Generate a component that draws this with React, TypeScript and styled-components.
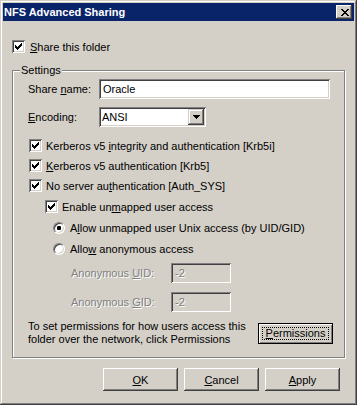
import React from "react";
import styled, { createGlobalStyle } from "styled-components";

const GlobalStyle = createGlobalStyle`
  body {
    margin: 0;
    background: #d4d0c8;
    font-family: "Liberation Sans", Arial, sans-serif;
    font-size: 11px;
    color: #000;
  }
`;

const Window = styled.div`
  width: 357px;
  height: 405px;
  box-sizing: border-box;
  padding: 3px;
  background: #d4d0c8;
  box-shadow: inset -1px -1px #404040, inset 1px 1px #d4d0c8,
    inset -2px -2px #808080, inset 2px 2px #fff;
  display: flex;
  flex-direction: column;
`;

const TitleBar = styled.div`
  height: 18px;
  display: flex;
  align-items: center;
  justify-content: space-between;
  padding: 0 2px 0 1px;
  background: #0a246a;
  color: #fff;
  font-weight: bold;
  font-size: 11px;
`;

const CloseButton = styled.div`
  width: 16px;
  height: 14px;
  box-sizing: border-box;
  background: #d4d0c8;
  display: flex;
  align-items: center;
  justify-content: center;
  box-shadow: inset -1px -1px #404040, inset 1px 1px #fff,
    inset -2px -2px #808080, inset 2px 2px #d4d0c8;
  padding-left: 1px;
`;

const Body = styled.div`
  display: flex;
  flex-direction: column;
  padding: 19px 9px 0 9px;
`;

const CheckRow = styled.label<{ $top?: number; $indent?: number; $gap?: number }>`
  display: flex;
  align-items: center;
  gap: ${(p) => p.$gap ?? 4}px;
  height: 13px;
  margin-top: ${(p) => p.$top ?? 0}px;
  margin-left: ${(p) => p.$indent ?? 0}px;
  white-space: nowrap;
`;

const RadioRow = styled(CheckRow)`
  gap: 5px;
  height: 12px;
`;

const sunken = `
  box-shadow: inset 1px 1px #808080, inset -1px -1px #fff,
    inset 2px 2px #404040, inset -2px -2px #d4d0c8;
`;

const Box = styled.span`
  width: 13px;
  height: 13px;
  flex: none;
  background: #fff;
  ${sunken}
  display: block;
  svg {
    display: block;
  }
`;

const Radio = styled.span<{ $on?: boolean }>`
  width: 12px;
  height: 12px;
  box-sizing: border-box;
  flex: none;
  border-radius: 50%;
  background: #fff;
  border: 1px solid;
  border-color: #808080 #fff #fff #808080;
  box-shadow: inset 1px 1px #404040, inset -1px -1px #d4d0c8;
  display: flex;
  align-items: center;
  justify-content: center;
  &::before {
    content: "";
    width: 4px;
    height: 4px;
    border-radius: 1px;
    background: ${(p) => (p.$on ? "#000" : "transparent")};
  }
`;

const Group = styled.fieldset`
  margin: 10px 0 0;
  padding: 2px 11px 11px 15px;
  border: 1px solid #808080;
  box-shadow: inset 1px 1px #fff, 1px 1px #fff;
  min-width: 0;
  display: flex;
  flex-direction: column;
`;

const Legend = styled.legend`
  margin-left: -8px;
  padding: 0 1px;
  line-height: 14px;
  background: #d4d0c8;
`;

const FieldRow = styled.div<{ $top?: number; $indent?: number }>`
  display: flex;
  align-items: center;
  margin-top: ${(p) => p.$top ?? 0}px;
  margin-left: ${(p) => p.$indent ?? 0}px;
`;

const FieldLabel = styled.span<{ $width: number; $disabled?: boolean }>`
  width: ${(p) => p.$width}px;
  flex: none;
  color: ${(p) => (p.$disabled ? "#808080" : "#000")};
  text-shadow: ${(p) => (p.$disabled ? "1px 1px 0 #fff" : "none")};
`;

const TextField = styled.div<{ $width: number; $disabled?: boolean }>`
  width: ${(p) => p.$width}px;
  height: 20px;
  box-sizing: border-box;
  padding: 0 4px;
  display: flex;
  align-items: center;
  background: ${(p) => (p.$disabled ? "#d4d0c8" : "#fff")};
  color: ${(p) => (p.$disabled ? "#808080" : "#000")};
  text-shadow: ${(p) => (p.$disabled ? "1px 1px 0 #fff" : "none")};
  ${sunken}
`;

const Select = styled.div`
  width: 107px;
  height: 20px;
  box-sizing: border-box;
  padding: 2px 2px 2px 3px;
  display: flex;
  align-items: center;
  justify-content: space-between;
  background: #fff;
  ${sunken}
`;

const DropButton = styled.span`
  width: 16px;
  height: 16px;
  box-sizing: border-box;
  background: #d4d0c8;
  display: flex;
  align-items: center;
  justify-content: center;
  box-shadow: inset -1px -1px #404040, inset 1px 1px #d4d0c8,
    inset -2px -2px #808080, inset 2px 2px #fff;
  svg {
    display: block;
  }
`;

const PermRow = styled.div`
  display: flex;
  align-items: center;
  justify-content: space-between;
  margin-top: 8px;
`;

const PermText = styled.p`
  margin: 0;
  line-height: 13px;
  white-space: nowrap;
`;

const Button = styled.div<{ $default?: boolean }>`
  width: 75px;
  height: ${(p) => (p.$default ? 21 : 23)}px;
  box-sizing: border-box;
  display: flex;
  align-items: center;
  justify-content: center;
  background: #d4d0c8;
  ${(p) =>
    p.$default
      ? `border: 1px solid #000;
         padding: 3px;
         box-shadow: inset 1px 1px #fff, inset -1px -1px #808080;`
      : `box-shadow: inset -1px -1px #404040, inset 1px 1px #fff,
         inset -2px -2px #808080, inset 2px 2px #d4d0c8;`}
`;

const Focus = styled.span`
  flex: 1;
  align-self: stretch;
  display: flex;
  align-items: center;
  justify-content: center;
  border: 1px dotted #000;
`;

const ButtonRow = styled.div`
  display: flex;
  justify-content: flex-end;
  gap: 6px;
  margin-top: 10px;
  padding-right: 5px;
`;

const Check = () => (
  <Box>
    <svg width="13" height="13" viewBox="0 0 13 13" shapeRendering="crispEdges">
      <path
        fill="#000"
        d="M3 5h1v3h-1z M4 6h1v3h-1z M5 7h1v3h-1z M6 6h1v3h-1z M7 5h1v3h-1z M8 4h1v3h-1z M9 3h1v3h-1z"
      />
    </svg>
  </Box>
);

const CloseGlyph = () => (
  <svg width="8" height="7" viewBox="0 0 8 7" shapeRendering="crispEdges">
    <path
      fill="#000"
      d="M0 0h2v1h-2z M6 0h2v1h-2z M1 1h2v1h-2z M5 1h2v1h-2z M2 2h4v1h-4z M3 3h2v1h-2z M2 4h4v1h-4z M1 5h2v1h-2z M5 5h2v1h-2z M0 6h2v1h-2z M6 6h2v1h-2z"
    />
  </svg>
);

export default function App() {
  return (
    <>
      <GlobalStyle />
      <Window>
        <TitleBar>
          <span>NFS Advanced Sharing</span>
          <CloseButton>
            <CloseGlyph />
          </CloseButton>
        </TitleBar>
        <Body>
          <CheckRow $gap={5}>
            <Check />
            <span>
              <u>S</u>hare this folder
            </span>
          </CheckRow>

          <Group>
            <Legend>Settings</Legend>

            <FieldRow>
              <FieldLabel $width={71}>
                Share <u>n</u>ame:
              </FieldLabel>
              <TextField $width={231}>Oracle</TextField>
            </FieldRow>

            <FieldRow $top={8}>
              <FieldLabel $width={71}>
                <u>E</u>ncoding:
              </FieldLabel>
              <Select>
                <span>ANSI</span>
                <DropButton>
                  <svg width="7" height="4" viewBox="0 0 7 4" shapeRendering="crispEdges">
                    <path fill="#000" d="M0 0h7v1h-7z M1 1h5v1h-5z M2 2h3v1h-3z M3 3h1v1h-1z" />
                  </svg>
                </DropButton>
              </Select>
            </FieldRow>

            <CheckRow $top={12} $indent={1}>
              <Check />
              <span>
                Kerberos v5 <u>i</u>ntegrity and authentication [Krb5i]
              </span>
            </CheckRow>
            <CheckRow $top={7} $indent={1}>
              <Check />
              <span>
                <u>K</u>erberos v5 authentication [Krb5]
              </span>
            </CheckRow>
            <CheckRow $top={7} $indent={1}>
              <Check />
              <span>
                No server au<u>t</u>hentication [Auth_SYS]
              </span>
            </CheckRow>
            <CheckRow $top={8} $indent={17}>
              <Check />
              <span>
                Enable un<u>m</u>apped user access
              </span>
            </CheckRow>
            <RadioRow $top={9} $indent={25}>
              <Radio $on />
              <span>
                A<u>l</u>low unmapped user Unix access (by UID/GID)
              </span>
            </RadioRow>
            <RadioRow $top={9} $indent={25}>
              <Radio />
              <span>
                Allo<u>w</u> anonymous access
              </span>
            </RadioRow>

            <FieldRow $top={8} $indent={43}>
              <FieldLabel $width={100} $disabled>
                Anonymous <u>U</u>ID:
              </FieldLabel>
              <TextField $width={60} $disabled>
                -2
              </TextField>
            </FieldRow>
            <FieldRow $top={9} $indent={43}>
              <FieldLabel $width={100} $disabled>
                Anonymous <u>G</u>ID:
              </FieldLabel>
              <TextField $width={60} $disabled>
                -2
              </TextField>
            </FieldRow>

            <PermRow>
              <PermText>
                To set permissions for how users access this
                <br />
                folder over the network, click Permissions
              </PermText>
              <Button $default>
                <Focus>
                  <span>
                    <u>P</u>ermissions
                  </span>
                </Focus>
              </Button>
            </PermRow>
          </Group>

          <ButtonRow>
            <Button>
              <span>
                <u>O</u>K
              </span>
            </Button>
            <Button>
              <span>
                <u>C</u>ancel
              </span>
            </Button>
            <Button>
              <span>
                <u>A</u>pply
              </span>
            </Button>
          </ButtonRow>
        </Body>
      </Window>
    </>
  );
}
